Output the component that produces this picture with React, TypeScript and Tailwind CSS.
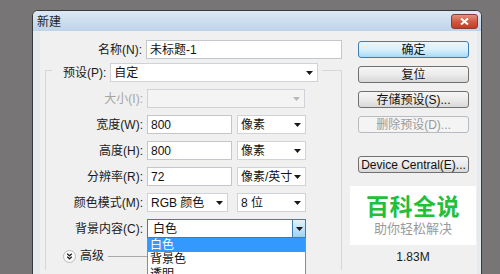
import React from "react";

const font = { fontFamily: '"Liberation Sans", "Noto Sans CJK SC", sans-serif' };

function Arrow({ color = "#1a1a1a" }: { color?: string }) {
  return (
    <svg width="7" height="4" viewBox="0 0 7 4" className="shrink-0">
      <path d="M0 0 H7 L3.5 4 Z" fill={color} />
    </svg>
  );
}

function Field({ value, w }: { value: string; w: string }) {
  return (
    <div className={`${w} h-[19px] bg-white border border-[#c3c7cc] flex items-center px-[3px] text-[12px] text-[#111]`}>
      {value}
    </div>
  );
}

function Select({ value, w, disabled }: { value: string; w: string; disabled?: boolean }) {
  return (
    <div
      className={`${w} h-[19px] border border-[#cfd2d6] flex items-center justify-between pl-[3px] pr-[4px] text-[12px] ${
        disabled ? "bg-[#f4f4f4]" : "bg-white text-[#111]"
      }`}
    >
      <span>{value}</span>
      <Arrow color={disabled ? "#b8b8b8" : "#1a1a1a"} />
    </div>
  );
}

function Row({ label, children, disabled }: { label: string; children: React.ReactNode; disabled?: boolean }) {
  return (
    <div className="flex items-center h-[19px]">
      <div className={`w-[97px] text-right text-[12px] ${disabled ? "text-[#a5a5a5]" : "text-[#1a1a1a]"}`}>{label}</div>
      <div className="ml-[4px] flex items-center">{children}</div>
    </div>
  );
}

function Btn({ children, variant }: { children: React.ReactNode; variant?: "default" | "disabled" }) {
  const cls =
    variant === "default"
      ? "border-[#3c7fb1] bg-gradient-to-b from-[#eaf6fd] via-[#d9f0fc] to-[#a7d9f5] text-[#111]"
      : variant === "disabled"
      ? "border-[#b8bcc0] bg-[#f4f4f4] text-[#9a9a9a]"
      : "border-[#707070] bg-gradient-to-b from-[#f6f6f6] via-[#ebebeb] to-[#d8d8d8] text-[#111]";
  return (
    <div className={`w-[111px] h-[17px] ml-[8px] rounded-[3px] border flex items-center justify-center text-[12px] ${cls}`}>
      {children}
    </div>
  );
}

export default function App() {
  return (
    <div className="w-[500px] h-[274px] overflow-hidden bg-[#777575] pt-[10px] pl-[32px]" style={font}>
      <div className="w-[450px] h-[280px] rounded-t-[6px] border border-[#3a3a3a] bg-[#e6ebf0] flex flex-col overflow-hidden">
        {/* title bar */}
        <div className="h-[20px] shrink-0 flex items-center justify-between bg-gradient-to-b from-[#dde9f5] to-[#bfd3e8] pl-[4px] pr-[3px]">
          <span className="text-[12px] text-[#1e1e1e] mt-[2px]">新建</span>
          <div className="w-[27px] h-[15px] rounded-[3px] border border-[#8a3a2e] bg-gradient-to-b from-[#e4907f] via-[#cf5a44] to-[#c13c26] flex items-center justify-center">
            <svg width="9" height="7" viewBox="0 0 9 7">
              <path d="M1 0.5 L8 6.5 M8 0.5 L1 6.5" stroke="#fff" strokeWidth="2" />
            </svg>
          </div>
        </div>

        {/* body */}
        <div className="flex-1 flex pl-[7px] pr-[4px]">
          <div className="flex-1 flex bg-[#f0f0f0]">
            {/* left */}
            <div className="w-[302px] flex flex-col">
              <div className="flex items-center h-[19px] mt-[9px]">
                <div className="w-[103px] text-right text-[12px] text-[#1a1a1a]">名称(N):</div>
                <div className="ml-[4px]">
                  <Field value="未标题-1" w="w-[196px]" />
                </div>
              </div>

              <div className="ml-[5px] w-[297px] mt-[11px] border border-b-0 border-[#d3d8dc] flex flex-col h-[200px]">
                <div className="-mt-[8px] ml-[6px] w-[270px] bg-[#f0f0f0] flex items-center h-[19px] pl-[11px]">
                  <span className="text-[12px] text-[#1a1a1a]">预设(P):</span>
                  <div className="ml-[4px]">
                    <Select value="自定" w="w-[208px]" />
                  </div>
                </div>

                <div className="mt-[7px] flex flex-col gap-[7px]">
                  <Row label="大小(I):" disabled>
                    <Select value="" w="w-[158px]" disabled />
                  </Row>
                  <Row label="宽度(W):">
                    <Field value="800" w="w-[85px]" />
                    <div className="ml-[5px]">
                      <Select value="像素" w="w-[69px]" />
                    </div>
                  </Row>
                  <Row label="高度(H):">
                    <Field value="800" w="w-[85px]" />
                    <div className="ml-[5px]">
                      <Select value="像素" w="w-[69px]" />
                    </div>
                  </Row>
                  <Row label="分辨率(R):">
                    <Field value="72" w="w-[85px]" />
                    <div className="ml-[5px]">
                      <Select value="像素/英寸" w="w-[69px]" />
                    </div>
                  </Row>
                  <Row label="颜色模式(M):">
                    <Select value="RGB 颜色" w="w-[81px]" />
                    <div className="ml-[9px]">
                      <Select value="8 位" w="w-[69px]" />
                    </div>
                  </Row>
                  <Row label="背景内容(C):">
                    <div className="relative">
                      <div className="w-[159px] h-[19px] bg-white border border-[#3c7fb1] flex items-center justify-between pl-[5px] text-[12px] text-[#111]">
                        <span>白色</span>
                        <div className="w-[13px] h-full border-l border-[#3c7fb1] bg-gradient-to-b from-[#e3f3fc] to-[#9fd2f0] flex items-center justify-center">
                          <Arrow />
                        </div>
                      </div>
                      <div className="absolute left-0 top-full w-[159px] h-[60px] bg-white border border-[#8c8c8c] border-t-0 flex flex-col text-[12px]">
                        <div className="h-[14px] leading-[14px] bg-[#3399ff] text-white pl-[2px]">白色</div>
                        <div className="h-[15px] leading-[15px] pl-[2px] text-[#111]">背景色</div>
                        <div className="h-[15px] leading-[15px] pl-[2px] text-[#111]">透明</div>
                      </div>
                    </div>
                  </Row>
                </div>

                <div className="mt-[11px] flex items-center h-[14px] ml-[17px]">
                  <svg width="13" height="13" viewBox="0 0 13 13">
                    <circle cx="6.5" cy="6.5" r="6" fill="#fbfbfb" stroke="#b9b9b9" />
                    <path d="M4.2 3.8 L6.5 5.8 L8.8 3.8 M4.2 6.8 L6.5 8.8 L8.8 6.8" stroke="#222" strokeWidth="1.3" fill="none" />
                  </svg>
                  <span className="ml-[4px] text-[12px] text-[#1a1a1a]">高级</span>
                  <div className="ml-[4px] w-[42px] h-px bg-[#a9a9a9]" />
                </div>
              </div>
            </div>

            {/* right */}
            <div className="ml-[8px] w-[126px] flex flex-col">
              <div className="mt-[10px] flex flex-col gap-[8px]">
                <Btn variant="default">确定</Btn>
                <Btn>复位</Btn>
                <Btn>存储预设(S)...</Btn>
                <Btn variant="disabled">删除预设(D)...</Btn>
              </div>
              <div className="mt-[23px]">
                <Btn>Device Central(E)...</Btn>
              </div>
              <div className="mt-[13px] h-[59px] bg-white flex flex-col items-center justify-center gap-[1px]">
                <span className="text-[23px] leading-[25px] font-semibold text-[#22c03a] tracking-[0.5px]">百科全说</span>
                <span className="text-[13px] leading-[16px] text-[#9a9a9a]">助你轻松解决</span>
              </div>
              <div className="mt-[3px] text-center text-[12px] text-[#1a1a1a]">1.83M</div>
            </div>
          </div>
        </div>
      </div>
    </div>
  );
}
